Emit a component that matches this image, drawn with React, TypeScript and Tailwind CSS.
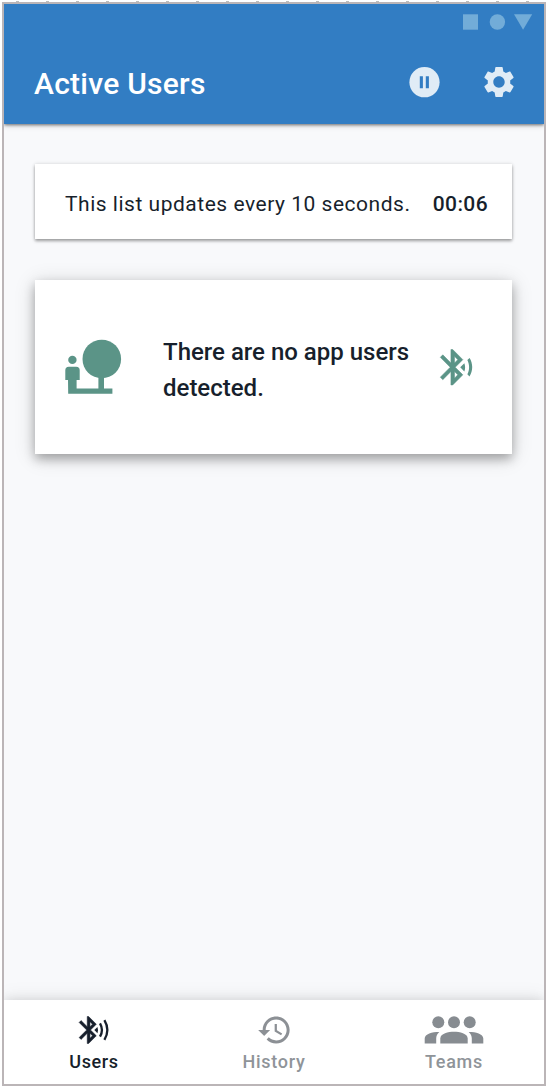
import type { ReactNode } from "react";

const BLUETOOTH =
  "M15.71 7.71L10 2H9v7.59L4.41 5 3 6.41 8.59 12 3 17.59 4.41 19 9 14.41V22h1l5.71-5.71-4.3-4.29 4.3-4.29zM11 5.83l1.88 1.88L11 9.59V5.83zm1.88 10.46L11 18.17v-3.76l1.88 1.88z";

function StatusIcons() {
  return (
    <svg className="h-4 w-[70px] shrink-0 fill-[#72acd8]" viewBox="0 0 70 16">
      <rect x="0" y="0.3" width="15" height="15.4" />
      <circle cx="34.4" cy="8" r="7.7" />
      <path d="M51 0.3h18.2L60.1 15.7z" />
    </svg>
  );
}

function PauseIcon() {
  return (
    <svg className="size-[31px]" viewBox="0 0 31 31">
      <circle cx="15.5" cy="15.2" r="15.1" fill="#e0ecf6" />
      <path d="M10.8 9.2h3.1v12h-3.1zM16.8 9.2h3.1v12h-3.1z" fill="#327dc3" />
    </svg>
  );
}

function GearIcon() {
  return (
    <svg className="size-9 fill-[#e0ecf6]" viewBox="0 0 24 24">
      <path d="M19.43 12.98c.04-.32.07-.64.07-.98s-.03-.66-.07-.98l2.11-1.65c.19-.15.24-.42.12-.64l-2-3.46c-.12-.22-.39-.3-.61-.22l-2.49 1c-.52-.4-1.08-.73-1.69-.98l-.38-2.65C14.46 2.18 14.25 2 14 2h-4c-.25 0-.46.18-.49.42l-.38 2.65c-.61.25-1.17.59-1.69.98l-2.49-1c-.23-.09-.49 0-.61.22l-2 3.46c-.13.22-.07.49.12.64l2.11 1.65c-.04.32-.07.65-.07.98s.03.66.07.98l-2.11 1.65c-.19.15-.24.42-.12.64l2 3.46c.12.22.39.3.61.22l2.49-1c.52.4 1.08.73 1.69.98l.38 2.65c.03.24.24.42.49.42h4c.25 0 .46-.18.49-.42l.38-2.65c.61-.25 1.17-.59 1.69-.98l2.49 1c.23.09.49 0 .61-.22l2-3.46c.12-.22.07-.49-.12-.64l-2.11-1.65zM12 15.8c-2.1 0-3.8-1.7-3.8-3.8s1.7-3.8 3.8-3.8 3.8 1.7 3.8 3.8-1.7 3.8-3.8 3.8z" />
    </svg>
  );
}

function ParkIcon() {
  return (
    <svg className="h-14 w-[57px] shrink-0 fill-[#5b9487]" viewBox="0 0 57 56">
      <circle cx="36.8" cy="20" r="19.3" />
      <path d="M3 41H0.3V31.2Q0.3 27.7 3.8 27.7h7.4Q14.7 27.7 14.7 31.2V41H11.6v8.4h21.8V38h5.6v11.4h8.4v5.4H3.2z" />
      <circle cx="7.4" cy="20.9" r="4.2" />
    </svg>
  );
}

function BluetoothSearchIcon() {
  return (
    <svg className="size-[42.5px] shrink-0 fill-[#5b9487]" viewBox="0 0 24 24">
      <path d="M14.24 12.01l2.32 2.32c.28-.72.44-1.51.44-2.33 0-.82-.16-1.59-.43-2.31l-2.33 2.32zm5.29-5.3l-1.26 1.26c.63 1.21.98 2.57.98 4.02s-.36 2.82-.98 4.02l1.2 1.2c.97-1.54 1.54-3.36 1.54-5.31-.01-1.89-.55-3.67-1.48-5.19z" />
      <path d={BLUETOOTH} strokeWidth="0.3" stroke="#5b9487" />
    </svg>
  );
}

function UsersIcon() {
  return (
    <svg className="h-7 w-8" viewBox="0 0 32 28">
      <g transform="translate(-2.9 -2.2) scale(1.35)">
        <path d={BLUETOOTH} fill="#171f2c" stroke="#171f2c" strokeWidth="0.4" />
        <path d="M14.24 12.01l2.32 2.32q.9-2.33 0-4.64z" fill="#171f2c" />
      </g>
      <path d="M22 7.3Q25.9 14 22 20.7M26.4 4.2Q32.3 14 26.4 23.8" fill="none" stroke="#171f2c" strokeWidth="2.3" />
    </svg>
  );
}

function HistoryIcon() {
  return (
    <svg className="h-7 w-8 fill-[#8c9095]" viewBox="0.9 2.7 21.33 18.67">
      <path d="M13 3c-4.97 0-9 4.03-9 9H1l3.89 3.89.07.14L9 12H6c0-3.87 3.13-7 7-7s7 3.13 7 7-3.13 7-7 7c-1.93 0-3.68-.79-4.94-2.06l-1.42 1.42C8.27 19.99 10.51 21 13 21c4.97 0 9-4.03 9-9s-4.03-9-9-9zm-1 5v5l4.28 2.54.72-1.21-3.5-2.08V8H12z" />
    </svg>
  );
}

function TeamsIcon() {
  return (
    <svg className="h-7 w-[60px] fill-[#878c91]" viewBox="0 0 60 28">
      <circle cx="14.3" cy="6.3" r="6" />
      <circle cx="30" cy="6.3" r="6" />
      <circle cx="45.7" cy="6.3" r="6" />
      <path d="M16.3 27.5v-5C16.3 17.6 24.4 15.8 30 15.8s13.7 1.8 13.7 6.7v5z" />
      <path d="M0.7 27.5v-5C0.7 17.6 8.8 15.8 15.3 15.9C13.2 17.7 12.2 20 12.2 22.5v5z" />
      <path d="M59.3 27.5v-5C59.3 17.6 51.2 15.8 44.7 15.9C46.8 17.7 47.8 20 47.8 22.5v5z" />
    </svg>
  );
}

function NavItem({ icon, label, active = false }: { icon: ReactNode; label: string; active?: boolean }) {
  return (
    <button className="flex flex-1 flex-col items-center pt-4">
      {icon}
      <span
        className={
          active
            ? "mt-1.5 text-[18px] leading-6 font-medium tracking-[0.65px] text-[#171f2c]"
            : "mt-1.5 text-[18px] leading-6 font-medium tracking-[0.7px] text-[#8f9499]"
        }
      >
        {label}
      </span>
    </button>
  );
}

export default function App() {
  return (
    <div className="flex h-[1092px] w-[546px] flex-col bg-white font-['Roboto',sans-serif]">
      <svg className="h-0.5 w-full shrink-0" viewBox="0 0 546 2">
        <path d="M16 1.5H546" stroke="#bdbdbd" strokeDasharray="3 27" />
      </svg>
      <div className="ml-0.5 flex h-[1084px] w-[544px] flex-col overflow-hidden border-2 border-[#bbb5b7] bg-[#f8f9fb]">
        <header className="z-10 flex h-[120px] shrink-0 flex-col bg-[#327dc3] shadow-[0_1px_3px_rgba(0,0,0,0.5),0_2px_6px_rgba(0,0,0,0.12)]">
          <div className="flex justify-end pt-2.5 pr-[11px]">
            <StatusIcons />
          </div>
          <div className="flex h-[94px] items-center pt-2.5 pl-[30px]">
            <h1 className="flex-1 pt-[3px] text-[30px] leading-9 font-medium tracking-[0.25px] text-white">
              Active Users
            </h1>
            <div className="mr-[27px] flex items-center gap-[41px]">
              <PauseIcon />
              <GearIcon />
            </div>
          </div>
        </header>
        <main className="flex flex-1 flex-col gap-[41px] pt-10 pr-8 pl-[31px] text-[#171f2c]">
          <section className="flex h-[75px] items-center justify-between bg-white pt-1 pr-6 pl-[30px] text-[21px] leading-7 whitespace-nowrap shadow-[0_2px_3px_rgba(0,0,0,0.35),0_0_4px_rgba(0,0,0,0.12)]">
            <span className="tracking-[0.52px]">This list updates every 10 seconds.</span>
            <span className="font-medium tracking-[0.4px]">00:06</span>
          </section>
          <section className="flex h-[174px] items-center bg-white pl-[30px] shadow-[0_5px_10px_rgba(0,0,0,0.28),0_3px_20px_rgba(0,0,0,0.16)]">
            <ParkIcon />
            <p className="ml-[41px] w-[260px] pt-[5px] text-[24px] leading-9 font-medium">
              There are no app users detected.
            </p>
            <div className="ml-[11.5px]">
              <BluetoothSearchIcon />
            </div>
          </section>
        </main>
        <nav className="z-10 flex h-[84px] shrink-0 bg-white shadow-[0_0_10px_rgba(0,0,0,0.12),0_-4px_18px_rgba(0,0,0,0.06)]">
          <NavItem icon={<UsersIcon />} label="Users" active />
          <NavItem icon={<HistoryIcon />} label="History" />
          <NavItem icon={<TeamsIcon />} label="Teams" />
        </nav>
      </div>
    </div>
  );
}
